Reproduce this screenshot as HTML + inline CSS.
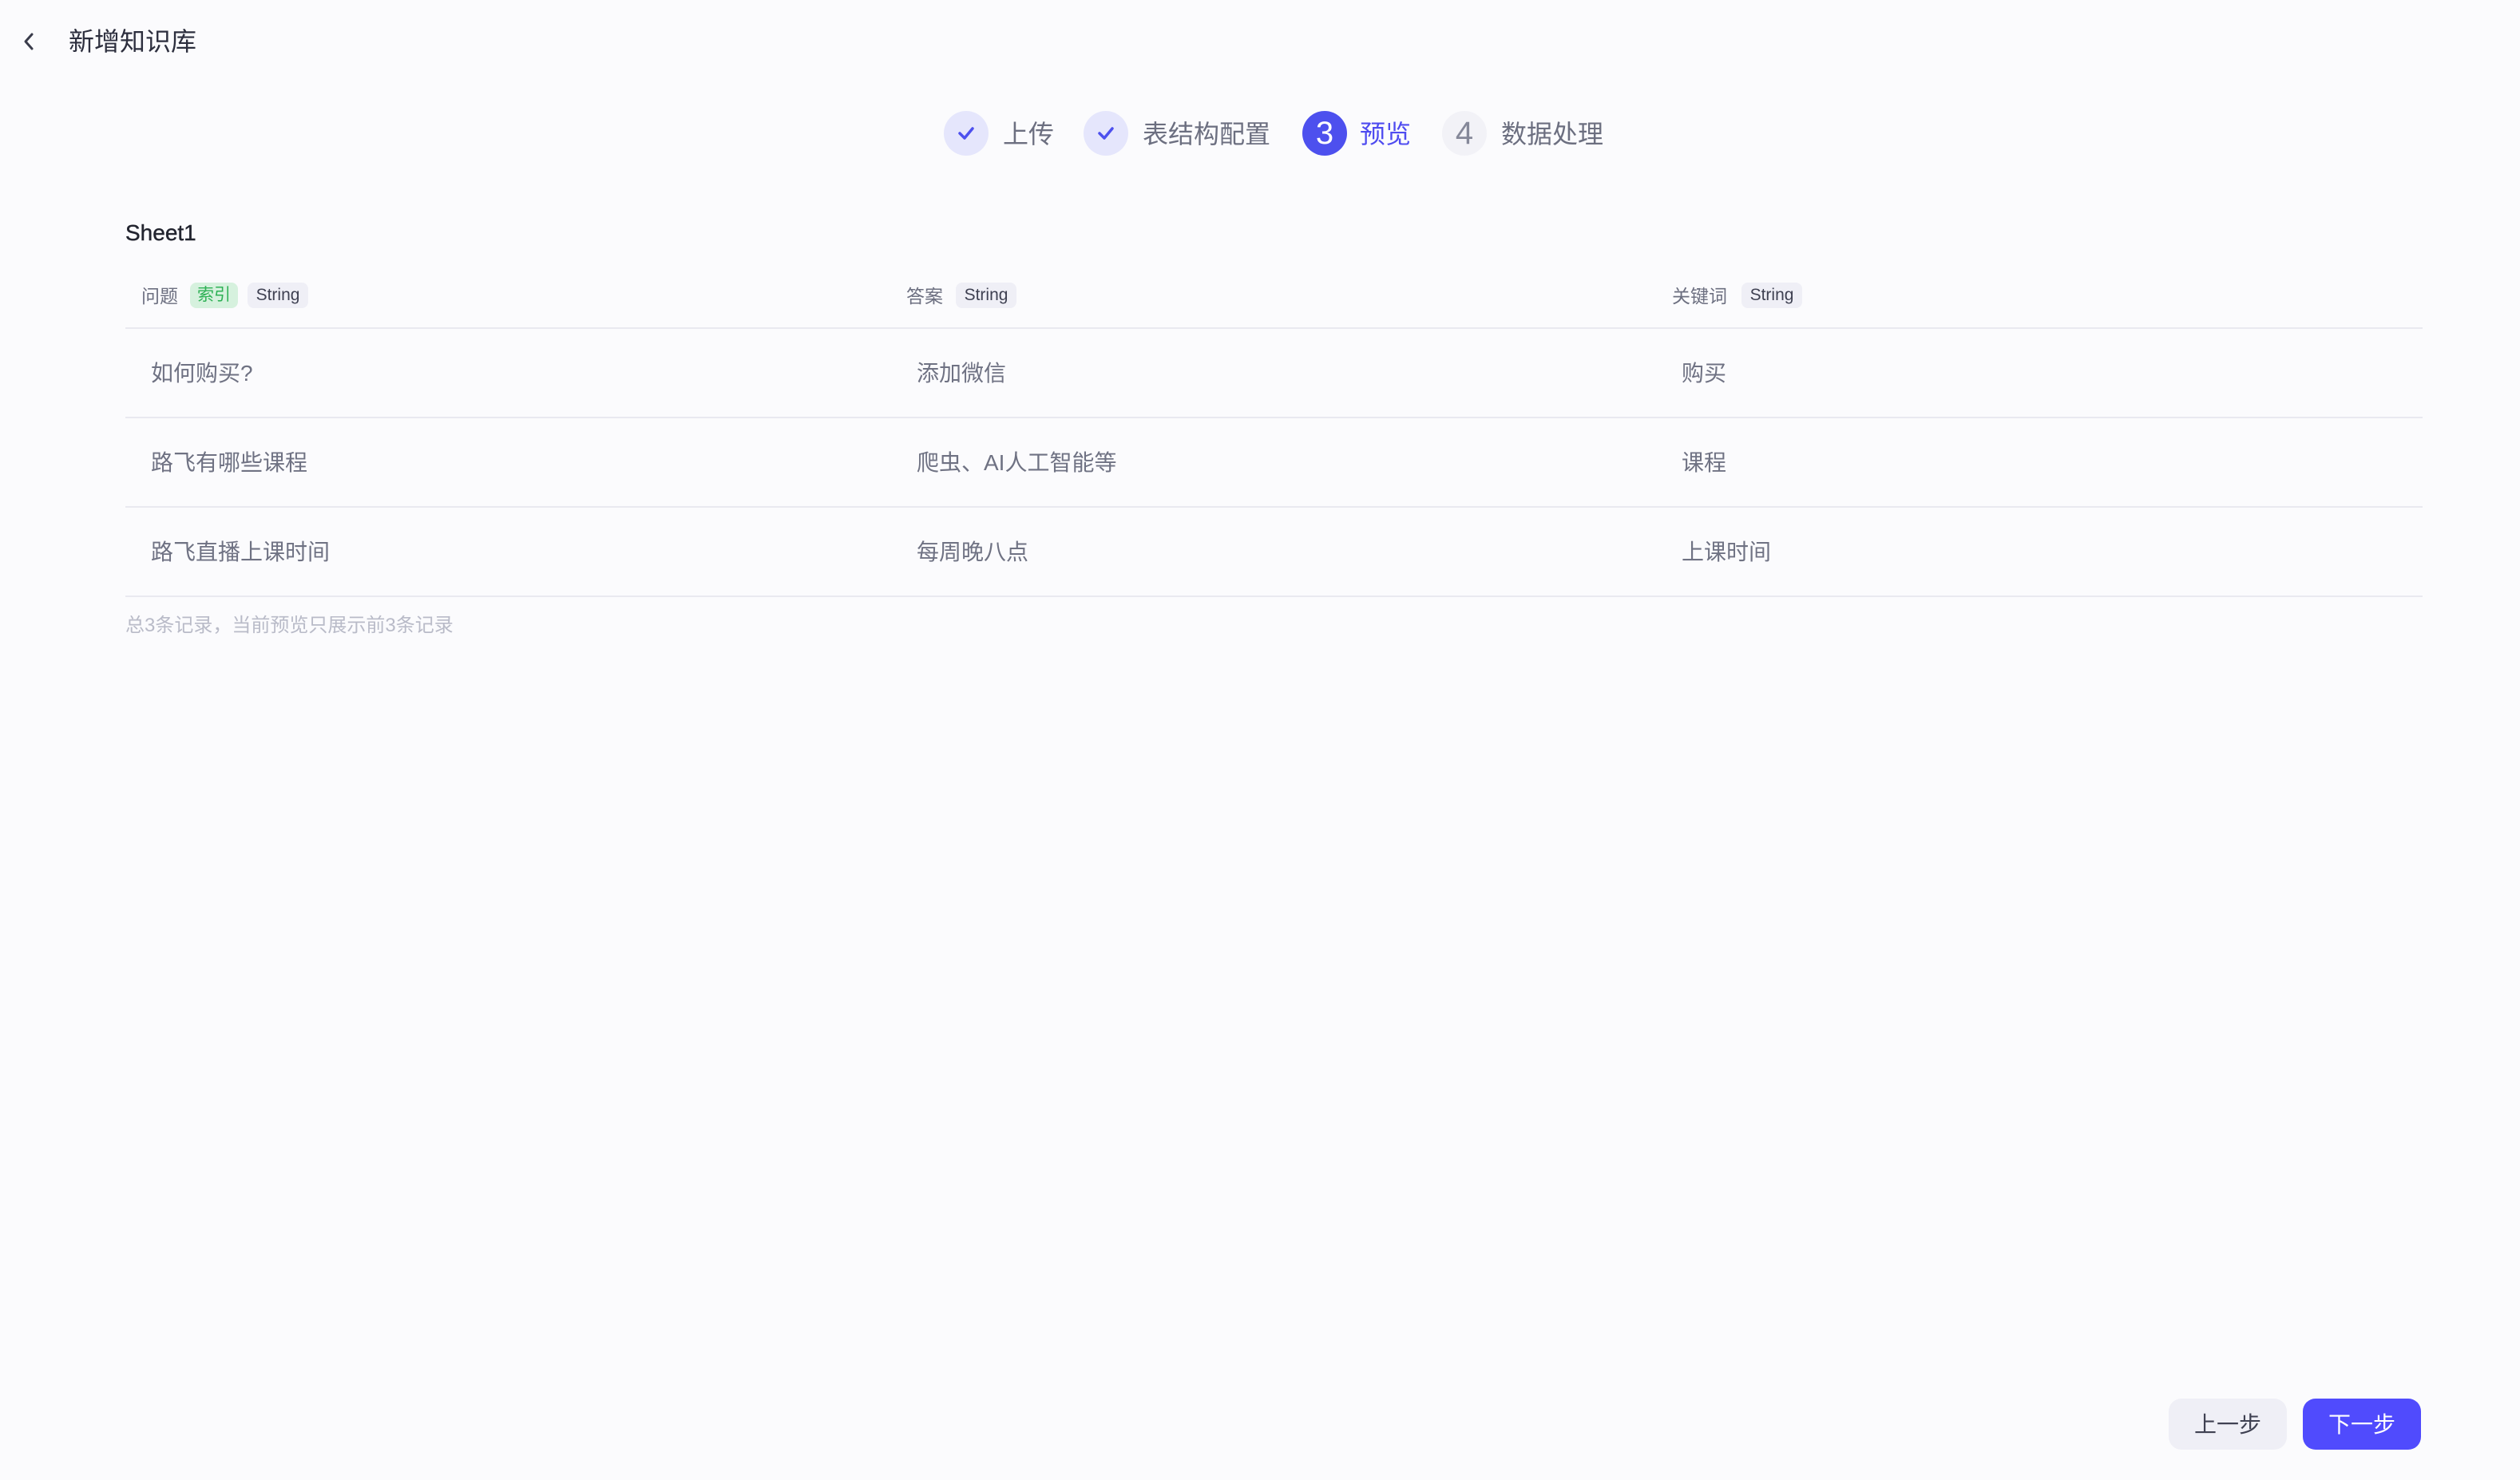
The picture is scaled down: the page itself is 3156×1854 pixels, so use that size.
<!DOCTYPE html>
<html><head><meta charset="utf-8"><style>
*{margin:0;padding:0;box-sizing:border-box}
body{width:3156px;height:1854px;background:#fbfbfd;font-family:"Liberation Sans","Noto Sans CJK SC",sans-serif;position:relative;overflow:hidden}
.a{position:absolute;white-space:nowrap}
.title{left:86px;top:31px;font-size:32px;line-height:42px;color:#2d2f3e}
.circ{position:absolute;top:139px;width:56px;height:56px;border-radius:50%;display:flex;align-items:center;justify-content:center}
.done{background:#e5e6fc}
.cur{background:#4d50ee;color:#fff;font-size:40px}
.wait{background:#f2f2f7;color:#858899;font-size:40px}
.st{top:147px;font-size:32px;line-height:42px;color:#6c6f80}
.hd{top:356px;font-size:23px;line-height:30px;color:#6c6f80}
.tag{position:absolute;top:354px;height:32px;border-radius:8px;font-size:21px;line-height:32px;text-align:center}
.g{background:#d6f1de;color:#2eb155}
.s{background:#efeff6;color:#3f4152}
.line{position:absolute;left:157px;width:2877px;height:2px;background:#e9e9f0}
.td{font-size:28px;line-height:36px;color:#6f7283}
.btn{position:absolute;top:1752px;height:64px;width:148px;border-radius:16px;font-size:28px;line-height:66px;text-align:center}
</style></head><body>
<svg class="a" style="left:28px;top:40px" width="16" height="24" viewBox="0 0 16 24"><path d="M12 3 L4 12 L12 21" fill="none" stroke="#3a3c4b" stroke-width="3" stroke-linecap="round" stroke-linejoin="round"/></svg>
<div class="a title">新增知识库</div>

<div class="circ done" style="left:1182px"><svg width="24" height="24" viewBox="0 0 24 24"><path d="M4 12 L10 18 L20 6" fill="none" stroke="#4d50ee" stroke-width="3.5" stroke-linecap="round" stroke-linejoin="round"/></svg></div>
<div class="a st" style="left:1256px">上传</div>
<div class="circ done" style="left:1357px"><svg width="24" height="24" viewBox="0 0 24 24"><path d="M4 12 L10 18 L20 6" fill="none" stroke="#4d50ee" stroke-width="3.5" stroke-linecap="round" stroke-linejoin="round"/></svg></div>
<div class="a st" style="left:1431px">表结构配置</div>
<div class="circ cur" style="left:1631px">3</div>
<div class="a st" style="left:1703px;color:#4f4cf0">预览</div>
<div class="circ wait" style="left:1806px">4</div>
<div class="a st" style="left:1880px">数据处理</div>

<div class="a" style="left:157px;top:274px;font-size:28px;line-height:36px;color:#22242f;-webkit-text-stroke:0.4px #22242f">Sheet1</div>

<div class="a hd" style="left:177px">问题</div>
<div class="tag g" style="left:238px;width:60px">索引</div>
<div class="tag s" style="left:310px;width:76px">String</div>
<div class="a hd" style="left:1135px">答案</div>
<div class="tag s" style="left:1197px;width:76px">String</div>
<div class="a hd" style="left:2094px">关键词</div>
<div class="tag s" style="left:2181px;width:76px">String</div>

<div class="line" style="top:410px"></div>
<div class="a td" style="left:189px;top:450px">如何购买?</div>
<div class="a td" style="left:1148px;top:450px">添加微信</div>
<div class="a td" style="left:2106px;top:450px">购买</div>
<div class="line" style="top:522px"></div>
<div class="a td" style="left:189px;top:562px">路飞有哪些课程</div>
<div class="a td" style="left:1148px;top:562px">爬虫、AI人工智能等</div>
<div class="a td" style="left:2106px;top:562px">课程</div>
<div class="line" style="top:634px"></div>
<div class="a td" style="left:189px;top:674px">路飞直播上课时间</div>
<div class="a td" style="left:1148px;top:674px">每周晚八点</div>
<div class="a td" style="left:2106px;top:674px">上课时间</div>
<div class="line" style="top:746px"></div>

<div class="a" style="left:157px;top:768px;font-size:24px;line-height:32px;color:#b9bbc8">总3条记录，当前预览只展示前3条记录</div>

<div class="btn" style="left:2716px;background:#efeff6;color:#3f4152">上一步</div>
<div class="btn" style="left:2884px;background:#504bfd;color:#fff">下一步</div>
</body></html>
